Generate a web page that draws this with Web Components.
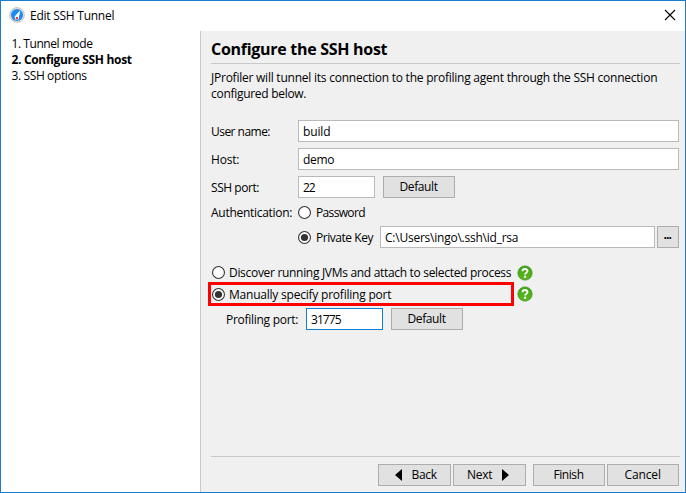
<!DOCTYPE html>
<html lang="en"><head><meta charset="utf-8"><title>Edit SSH Tunnel</title>
<style>
html,body{margin:0;height:100%;overflow:hidden}
body{font:12px/16px "Open Sans","Noto Sans",sans-serif;color:#000}
</style></head><body>
<ssh-dialog></ssh-dialog>
<script>
const define=(name,html,setup)=>customElements.define(name,class extends HTMLElement{
  connectedCallback(){
    if(!this.shadowRoot){this.attachShadow({mode:'open'}).innerHTML=html;}
    if(setup)setup(this,this.shadowRoot);
  }
});

// Label whose tracking is adjusted so that the text fills the given width.
define('fit-text',`<style>:host{display:block;flex:none;white-space:pre}span{display:inline-block}</style><span><slot></slot></span>`,(el,r)=>{
  const w=+el.getAttribute('w'),s=r.querySelector('span');
  el.style.width=w+'px';
  const n=el.textContent.length;
  s.style.letterSpacing=((w-.5-s.getBoundingClientRect().width)/(n-1))+'px';
});
define('text-field',`<style>:host{display:flex;box-sizing:border-box;height:22px;border:1px solid #bababa;background:#fff;padding:3px 0 0 4px;line-height:16px;flex:none}
:host([focused]){border-color:#0f80d7}:host([grow]){flex:1}</style><slot></slot>`);
define('push-button',`<style>:host{display:flex;box-sizing:border-box;width:72px;height:22px;border:1px solid #adadad;background:#e1e1e1;justify-content:center;line-height:16px;padding-top:2px;flex:none}
:host([wide]){width:73px}:host([small]){width:22px}</style><slot></slot>`);
define('radio-mark',`<style>:host{display:block;width:13px;height:13px;flex:none}svg{display:block}.dot{display:none}:host([checked]) .dot{display:block}</style>
<svg width="13" height="13"><circle cx="6.5" cy="6.5" r="5.95" fill="#fff" stroke="#333" stroke-width="1.1"/><circle class="dot" cx="6.5" cy="6.5" r="3.6" fill="#333"/></svg>`);
define('help-icon',`<style>:host{display:block;width:16px;height:16px;flex:none}svg{display:block}</style>
<svg width="16" height="16"><defs><linearGradient id="g" x2="0" y2="1"><stop stop-color="#40a512"/><stop offset="1" stop-color="#61b81e"/></linearGradient></defs><circle cx="8" cy="8" r="7.1" fill="url(#g)" stroke="#37921a" stroke-width=".8"/><path d="M5.5 6.2C5.5 3.3 10.5 3.3 10.5 6C10.5 7.7 8.1 7.7 8.1 9.6" fill="none" stroke="#fff" stroke-width="1.9"/><rect x="7.1" y="10.7" width="2" height="2" fill="#fff"/></svg>`);
define('title-bar',`<style>:host{display:flex;height:30px;flex:none;background:#fff}
.logo{margin:6px 0 0 8px;flex:none}fit-text{margin:7px 0 0 5px}.close{margin:8px 9px 0 auto}</style>
<svg class="logo" width="16" height="16"><circle cx="8" cy="8" r="7.4" fill="#e0e0df" stroke="#bcbcbc" stroke-width=".8"/><circle cx="8" cy="8" r="6" fill="#1d8cf2"/><path d="M11.4 3.2L10 9.4L9.6 12.4H6.2L5.6 9.6Z" fill="#fff"/><rect x="6.8" y="10" width="2.2" height="2.2" fill="#f0442a"/></svg>
<fit-text w="85">Edit SSH Tunnel</fit-text>
<svg class="close" width="12" height="12"><path d="M1 1L11 11M11 1L1 11" stroke="#000" stroke-width="1.1" fill="none"/></svg>`);
define('step-list',`<style>:host{display:block;box-sizing:border-box;width:199px;flex:none;background:#fff;padding:5px 0 0 10.5px}.on{font-weight:700}</style>
<fit-text w="82">1. Tunnel mode</fit-text><fit-text class="on" w="121">2. Configure SSH host</fit-text><fit-text w="76">3. SSH options</fit-text>`);
define('form-row',`<style>:host{display:flex;height:22px;margin-bottom:6px}.label{width:87px;flex:none;padding-top:4px}.body{display:flex;flex:1}</style><div class="label"><slot name="label"></slot></div><div class="body"><slot></slot></div>`);
define('wizard-page',`<style>
:host{display:flex;flex:1;flex-direction:column;box-sizing:border-box;background:#f0f0f0;border-left:1px solid #c8c8c8;padding:7px 5px 6px 10px}
.title{font-size:16px;line-height:22px;font-weight:700;margin-bottom:3px}
.rule{height:1px;background:#c9c9c9;flex:none}
.intro{margin:6px 0 18px}
.fields{margin-right:1px}
.gap{margin-left:8px}
.radio{margin:2px 5px 0 0}.rt{margin-top:1px}
.auth{height:22px;margin-bottom:0}.auth .radio{margin-top:2px}
.key{height:22px;margin-bottom:12px}.key .radio{margin-top:5px}.key .rt{margin-top:4px}
.path{margin-left:6px;margin-right:2px}
.opt{display:flex;width:306px;height:24px;box-sizing:border-box;padding:5px 0 0 4px;margin-left:-3px;flex:none}
.opt .radio{margin:1px 4px 0 0}.opt .rt{margin:0}
.marked{border:3px solid #f00;padding:2px 0 0 1px;margin-top:-2px}
.line{display:flex}.line help-icon{margin:5px 0 0 3px}.line .second{margin-top:2px}
.port{display:flex;margin:2px 0 0 15px}.port .lab{margin:4px 7px 0 0}
.buttons{display:flex;justify-content:flex-end;gap:2px;margin:7px 1px 0 0}
.foot{margin-top:auto}.finish{margin-left:5px}
.nav{display:flex}.nav svg{margin-top:2px}.back svg{margin-right:10px;margin-left:3px}.next svg{margin-left:9px;margin-right:3px}
</style>
<fit-text class="title" w="177">Configure the SSH host</fit-text><div class="rule"></div>
<div class="intro"><fit-text w="447">JProfiler will tunnel its connection to the profiling agent through the SSH connection</fit-text><fit-text w="96">configured below.</fit-text></div>
<div class="fields">
<form-row><fit-text slot="label" w="60">User name:</fit-text><text-field grow><fit-text w="28">build</fit-text></text-field></form-row>
<form-row><fit-text slot="label" w="29">Host:</fit-text><text-field grow><fit-text w="32">demo</fit-text></text-field></form-row>
<form-row><fit-text slot="label" w="49">SSH port:</fit-text><text-field style="width:77px"><fit-text w="13">22</fit-text></text-field><push-button class="gap"><fit-text w="39">Default</fit-text></push-button></form-row>
<form-row class="auth"><fit-text slot="label" w="82" style="margin-top:-3px">Authentication:</fit-text><radio-mark class="radio"></radio-mark><fit-text class="rt" w="50">Password</fit-text></form-row>
<form-row class="key"><radio-mark checked class="radio"></radio-mark><fit-text class="rt" w="58">Private Key</fit-text><text-field class="path" grow><fit-text w="134">C:&#92;Users&#92;ingo&#92;.ssh&#92;id_rsa</fit-text></text-field><push-button small><fit-text w="9" style="font-weight:700;margin-top:-2px">...</fit-text></push-button></form-row>
</div>
<div class="line"><div class="opt"><radio-mark class="radio"></radio-mark><fit-text class="rt" w="283">Discover running JVMs and attach to selected process</fit-text></div><help-icon></help-icon></div>
<div class="line"><div class="opt marked"><radio-mark checked class="radio"></radio-mark><fit-text class="rt" w="163">Manually specify profiling port</fit-text></div><help-icon class="second"></help-icon></div>
<div class="port"><fit-text class="lab" w="73">Profiling port:</fit-text><text-field focused style="width:77px"><fit-text w="31">31775</fit-text></text-field><push-button class="gap"><fit-text w="39">Default</fit-text></push-button></div>
<div class="foot"><div class="rule"></div><div class="buttons">
<push-button wide><div class="nav back"><svg width="7" height="12"><path d="M7 0V12L0 6Z"/></svg><fit-text w="26">Back</fit-text></div></push-button>
<push-button wide><div class="nav next"><fit-text w="26">Next</fit-text><svg width="7" height="12"><path d="M0 0V12L7 6Z"/></svg></div></push-button>
<push-button class="finish"><fit-text w="31">Finish</fit-text></push-button>
<push-button><fit-text w="37">Cancel</fit-text></push-button></div></div>`);
define('ssh-dialog',`<style>:host{display:flex;flex-direction:column;box-sizing:border-box;width:686px;height:493px;border:1px solid #1a7dcb;background:#fff}.main{display:flex;flex:1;min-height:0}</style><title-bar></title-bar><div class="main"><step-list></step-list><wizard-page></wizard-page></div>`);
</script></body></html>
